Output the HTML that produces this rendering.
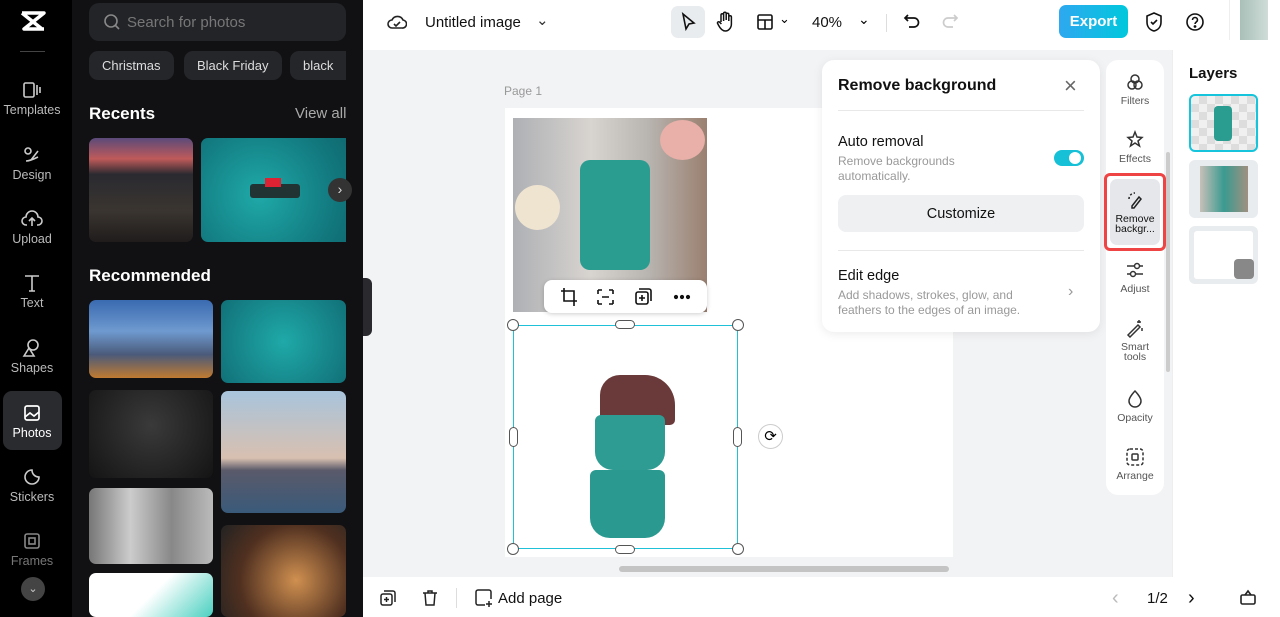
<!DOCTYPE html>
<html><head><meta charset="utf-8"><style>
*{margin:0;padding:0;box-sizing:border-box}
body{width:1280px;height:617px;overflow:hidden;font-family:"Liberation Sans",sans-serif;background:#f2f3f5;position:relative}
.abs{position:absolute}
.rail{left:0;top:0;width:72px;height:617px;background:#000}
.ri{position:absolute;left:0;width:64px;text-align:center;color:#bbb;font-size:12.5px}
.ri svg{display:block;margin:0 auto 3px}
.panel{left:72px;top:0;width:291px;height:617px;background:#111113}
.chip{position:absolute;top:51px;height:29px;border-radius:9px;background:#25262a;color:#ddd;font-size:13px;line-height:29px;padding:0 13px}
.img{position:absolute;border-radius:7px}
.top{left:363px;top:0;width:917px;height:50px;background:#fff}
.bot{left:363px;top:577px;width:809px;height:40px;background:#fff}
.tl{position:absolute;left:1106px;width:58px;text-align:center;font-size:10.5px;color:#555;line-height:10px}
.tl svg{display:block;margin:0 auto 4px}
</style></head><body>
<div class="abs rail"></div>
<svg class="abs" style="left:19px;top:11px" width="28" height="20" viewBox="0 0 28 20"><path d="M3 2h22l-20 16h20M3 18M3 2l20 16" stroke="#fff" stroke-width="3.5" fill="none" stroke-linejoin="round"/></svg>
<div class="abs" style="left:20px;top:51px;width:25px;height:1px;background:#444"></div>
<div class="ri" style="top:80px"><svg width="20" height="20" viewBox="0 0 20 20" fill="none" stroke="#ccc" stroke-width="1.6"><rect x="2" y="3" width="10" height="14" rx="1.5"/><path d="M15 5v10M18 7v6"/></svg>Templates</div>
<div class="ri" style="top:145px"><svg width="20" height="20" viewBox="0 0 20 20" fill="none" stroke="#ccc" stroke-width="1.6"><circle cx="6" cy="6" r="3"/><path d="M9 15l7-9M4 16c4 0 8-2 12-4"/></svg>Design</div>
<div class="ri" style="top:209px"><svg width="22" height="20" viewBox="0 0 22 20" fill="none" stroke="#ccc" stroke-width="1.6"><path d="M6 16H5a4 4 0 010-8 6 6 0 0112 0 4 4 0 010 8h-1M11 17V9M8 12l3-3 3 3"/></svg>Upload</div>
<div class="ri" style="top:273px"><svg width="20" height="20" viewBox="0 0 20 20" fill="none" stroke="#ccc" stroke-width="1.6"><path d="M3 3h14M10 3v15M7 18h6"/></svg>Text</div>
<div class="ri" style="top:338px"><svg width="20" height="20" viewBox="0 0 20 20" fill="none" stroke="#ccc" stroke-width="1.6"><circle cx="11" cy="7" r="5"/><path d="M2 18l5-8 5 8z"/></svg>Shapes</div>
<div class="abs" style="left:3px;top:391px;width:59px;height:59px;border-radius:9px;background:#2a2b2f"></div>
<div class="ri" style="top:403px;color:#fff"><svg width="20" height="20" viewBox="0 0 20 20" fill="none" stroke="#fff" stroke-width="1.7"><rect x="3" y="3" width="14" height="14" rx="2"/><path d="M3 14l5-4 4 3 5-4"/></svg>Photos</div>
<div class="ri" style="top:467px"><svg width="20" height="20" viewBox="0 0 20 20" fill="none" stroke="#ccc" stroke-width="1.6"><path d="M17 10a7 7 0 11-7-7c0 4 3 7 7 7z"/></svg>Stickers</div>
<div class="ri" style="top:531px;color:#777"><svg width="20" height="20" viewBox="0 0 20 20" fill="none" stroke="#888" stroke-width="1.6"><rect x="3" y="3" width="14" height="14" rx="2"/><rect x="7" y="7" width="6" height="6"/></svg>Frames</div>
<div class="abs" style="left:21px;top:577px;width:24px;height:24px;border-radius:50%;background:#444;color:#ccc;font-size:11px;text-align:center;line-height:24px">⌄</div>

<div class="abs panel"></div>
<div class="abs" style="left:89px;top:3px;width:257px;height:38px;border-radius:10px;background:#232428;color:#777;font-size:15px;line-height:40px;padding-left:38px">Search for photos</div>
<svg class="abs" style="left:103px;top:13px" width="18" height="18" viewBox="0 0 18 18" fill="none" stroke="#888" stroke-width="1.6"><circle cx="8" cy="8" r="6"/><path d="M12.5 12.5L16 16"/></svg>
<div class="chip" style="left:89px">Christmas</div>
<div class="chip" style="left:184px">Black Friday</div>
<div class="chip" style="left:290px;width:56px;border-radius:9px 0 0 9px">black</div>
<div class="abs" style="left:89px;top:104px;color:#fff;font-weight:bold;font-size:17px">Recents</div>
<div class="abs" style="left:295px;top:105px;color:#aaa;font-size:15px">View all</div>
<div class="img" style="left:89px;top:138px;width:104px;height:104px;background:linear-gradient(180deg,#5a4a7a 0%,#c05a5a 20%,#2a2a30 35%,#3a3530 70%,#201c1c)"></div>
<div class="img" style="left:201px;top:138px;width:145px;height:104px;border-radius:7px 0 0 7px;background:radial-gradient(circle at 40% 55%,#1fa9a8,#127a80 70%,#0f6a70)"></div>
<div class="abs" style="left:250px;top:184px;width:50px;height:14px;background:#233;border-radius:3px"></div>
<div class="abs" style="left:265px;top:178px;width:16px;height:9px;background:#d23"></div>
<div class="abs" style="left:328px;top:178px;width:24px;height:24px;border-radius:50%;background:#333;color:#ddd;text-align:center;line-height:23px;font-size:14px">›</div>
<div class="abs" style="left:89px;top:266px;color:#fff;font-weight:bold;font-size:17px">Recommended</div>
<div class="img" style="left:89px;top:300px;width:124px;height:78px;background:linear-gradient(180deg,#3a6ab0,#6f9ad0 40%,#4a5a7a 70%,#c07a30)"></div>
<div class="img" style="left:221px;top:300px;width:125px;height:83px;background:radial-gradient(circle,#1fa9a8,#117078)"></div>
<div class="img" style="left:89px;top:390px;width:124px;height:88px;background:radial-gradient(circle at 50% 40%,#3a3a3a,#141414)"></div>
<div class="img" style="left:221px;top:391px;width:125px;height:122px;background:linear-gradient(180deg,#a8c4dc,#d8c0b0 55%,#5a5a6a 65%,#3a5a7a)"></div>
<div class="img" style="left:89px;top:488px;width:124px;height:76px;background:linear-gradient(90deg,#777,#ccc,#888,#bbb)"></div>
<div class="img" style="left:221px;top:525px;width:125px;height:92px;background:radial-gradient(circle at 60% 60%,#d09050,#503020 60%,#222)"></div>
<div class="img" style="left:89px;top:573px;width:124px;height:44px;background:linear-gradient(135deg,#fff 50%,#4ad0c0)"></div>
<div class="abs" style="left:363px;top:278px;width:9px;height:58px;background:#2a2a2e;border-radius:0 6px 6px 0"></div>

<div class="abs top"></div>
<svg class="abs" style="left:387px;top:12px" width="20" height="20" viewBox="0 0 20 20" fill="none" stroke="#222" stroke-width="1.6"><path d="M6 16H5a4 4 0 010-8 6 6 0 0111 0 4 4 0 01-1 8H6z"/><path d="M7 12l2 2 4-4"/></svg>
<div class="abs" style="left:425px;top:14px;font-size:15px;color:#111">Untitled image</div>
<div class="abs" style="left:536px;top:11px;font-size:15px;color:#333">⌄</div>
<div class="abs" style="left:671px;top:6px;width:34px;height:32px;border-radius:7px;background:#e9ecef"></div>
<svg class="abs" style="left:679px;top:12px" width="18" height="20" viewBox="0 0 18 20" fill="none" stroke="#111" stroke-width="1.6"><path d="M4 2l11 9-5 1-3 5z"/></svg>
<svg class="abs" style="left:715px;top:11px" width="20" height="22" viewBox="0 0 20 22" fill="none" stroke="#111" stroke-width="1.5"><path d="M6 11V4a1.3 1.3 0 012.6 0v6M8.6 9V2.5a1.3 1.3 0 012.6 0V9M11.2 9V3.5a1.3 1.3 0 012.6 0V10M13.8 10V6a1.3 1.3 0 012.6 0v7c0 4-3 7-6 7s-5-2-7-6l-1-2a1.3 1.3 0 012-1l2 2"/></svg>
<svg class="abs" style="left:756px;top:13px" width="18" height="18" viewBox="0 0 18 18" fill="none" stroke="#111" stroke-width="1.6"><rect x="2" y="2" width="14" height="14" rx="1.5"/><path d="M2 7h14M9 7v9"/></svg>
<div class="abs" style="left:779px;top:11px;font-size:13px">⌄</div>
<div class="abs" style="left:812px;top:14px;font-size:15px;color:#111">40%</div>
<div class="abs" style="left:858px;top:11px;font-size:14px">⌄</div>
<div class="abs" style="left:886px;top:14px;width:1px;height:18px;background:#ddd"></div>
<svg class="abs" style="left:903px;top:12px" width="18" height="18" viewBox="0 0 18 18" fill="none" stroke="#111" stroke-width="1.7"><path d="M5 3L2 6l3 3M2 6h9a4.5 4.5 0 010 9H6"/></svg>
<svg class="abs" style="left:941px;top:12px" width="18" height="18" viewBox="0 0 18 18" fill="none" stroke="#ccc" stroke-width="1.7"><path d="M13 3l3 3-3 3M16 6H7a4.5 4.5 0 000 9h5"/></svg>
<div class="abs" style="left:1059px;top:5px;width:69px;height:33px;border-radius:7px;background:linear-gradient(90deg,#2ea8f0,#00c8dc);color:#fff;font-size:15px;font-weight:bold;text-align:center;line-height:34px">Export</div>
<svg class="abs" style="left:1144px;top:11px" width="20" height="22" viewBox="0 0 20 22" fill="none" stroke="#111" stroke-width="1.6"><path d="M10 2l7 3v6c0 5-3 8-7 9-4-1-7-4-7-9V5z"/><path d="M7 11l2 2 4-4"/></svg>
<svg class="abs" style="left:1185px;top:12px" width="20" height="20" viewBox="0 0 20 20" fill="none" stroke="#111" stroke-width="1.6"><circle cx="10" cy="10" r="8"/><path d="M7.5 8a2.5 2.5 0 115 0c0 2-2.5 2-2.5 4"/><circle cx="10" cy="14.5" r=".6" fill="#111"/></svg>
<div class="abs" style="left:1229px;top:0;width:1px;height:40px;background:#eee"></div>
<div class="abs" style="left:1240px;top:0;width:28px;height:40px;background:linear-gradient(90deg,#a8c0b8,#d0dcd8)"></div>

<div class="abs" style="left:1172px;top:50px;width:108px;height:567px;background:#fff;border-left:1px solid #eee"></div>
<div class="abs" style="left:1189px;top:65px;font-weight:bold;font-size:15px;color:#111">Layers</div>
<div class="abs" style="left:1189px;top:94px;width:69px;height:58px;border:2px solid #16c5db;border-radius:6px;background:repeating-conic-gradient(#ddd 0 25%,#f0f0f0 0 50%) 0 0/16px 16px"></div>
<div class="abs" style="left:1214px;top:106px;width:18px;height:35px;background:#2a9c90;border-radius:4px"></div>
<div class="abs" style="left:1189px;top:160px;width:69px;height:58px;border-radius:6px;background:#e8ecef"></div>
<div class="abs" style="left:1200px;top:166px;width:48px;height:46px;background:linear-gradient(90deg,#c8c0b8,#3a9a90 50%,#a09080)"></div>
<div class="abs" style="left:1189px;top:226px;width:69px;height:58px;border-radius:6px;background:#e8ecef"></div>
<div class="abs" style="left:1194px;top:231px;width:59px;height:48px;background:#fff;border-radius:3px"></div>
<div class="abs" style="left:1234px;top:259px;width:20px;height:20px;background:#888;border-radius:4px"></div>

<div class="abs" style="left:504px;top:84px;font-size:12px;color:#999">Page 1</div>
<div class="abs" style="left:505px;top:108px;width:448px;height:449px;background:#fff"></div>
<div class="abs" style="left:513px;top:118px;width:194px;height:194px;background:linear-gradient(90deg,#aeb0b4,#d8d4d0 40%,#b8b4b0 70%,#9a8070)"></div>
<div class="abs" style="left:580px;top:160px;width:70px;height:110px;background:#2a9c90;border-radius:10px"></div>
<div class="abs" style="left:515px;top:185px;width:45px;height:45px;background:#efe4d0;border-radius:50%"></div>
<div class="abs" style="left:660px;top:120px;width:45px;height:40px;background:#e8b0a8;border-radius:50%"></div>
<div class="abs" style="left:544px;top:280px;width:163px;height:33px;background:#fff;border-radius:8px;box-shadow:0 1px 5px rgba(0,0,0,.2);font-size:14px;color:#111"></div>
<svg class="abs" style="left:560px;top:287px" width="140" height="20" viewBox="0 0 140 20" fill="none" stroke="#111" stroke-width="1.6"><path d="M4 1v13h13M1 4h13v15"/><path d="M38 3h4M38 3v4M53 3h-4M53 3v4M38 17h4M38 17v-4M53 17h-4M53 17v-4M42 10h7"/><rect x="76" y="5" width="12" height="12" rx="2"/><path d="M79 2h10a2 2 0 012 2v10M82 8v6M79 11h6"/><circle cx="116" cy="10" r="1.3" fill="#111"/><circle cx="122" cy="10" r="1.3" fill="#111"/><circle cx="128" cy="10" r="1.3" fill="#111"/></svg>
<div class="abs" style="left:513px;top:325px;width:225px;height:224px;border:1.5px solid #1ec1d8"></div>
<div class="abs" style="left:590px;top:370px;width:100px;height:170px">
<div class="abs" style="left:10px;top:5px;width:75px;height:50px;background:#6a3a3a;border-radius:20px 30px 5px 5px"></div>
<div class="abs" style="left:5px;top:45px;width:70px;height:55px;background:#2e9c92;border-radius:6px 6px 18px 18px"></div>
<div class="abs" style="left:0;top:100px;width:75px;height:68px;background:#2a9a90;border-radius:6px 6px 20px 20px"></div>
</div>
<div class="abs" style="left:507px;top:319px;width:12px;height:12px;border-radius:50%;background:#fff;border:1px solid #555"></div>
<div class="abs" style="left:732px;top:319px;width:12px;height:12px;border-radius:50%;background:#fff;border:1px solid #555"></div>
<div class="abs" style="left:507px;top:543px;width:12px;height:12px;border-radius:50%;background:#fff;border:1px solid #555"></div>
<div class="abs" style="left:732px;top:543px;width:12px;height:12px;border-radius:50%;background:#fff;border:1px solid #555"></div>
<div class="abs" style="left:615px;top:320px;width:20px;height:9px;border-radius:5px;background:#fff;border:1px solid #555"></div>
<div class="abs" style="left:615px;top:545px;width:20px;height:9px;border-radius:5px;background:#fff;border:1px solid #555"></div>
<div class="abs" style="left:509px;top:427px;width:9px;height:20px;border-radius:5px;background:#fff;border:1px solid #555"></div>
<div class="abs" style="left:733px;top:427px;width:9px;height:20px;border-radius:5px;background:#fff;border:1px solid #555"></div>
<div class="abs" style="left:758px;top:424px;width:25px;height:25px;border-radius:50%;background:#fff;border:1px solid #ccc;text-align:center;line-height:23px;font-size:15px">⟳</div>
<div class="abs" style="left:619px;top:566px;width:330px;height:6px;border-radius:3px;background:#c4c4c4"></div>

<div class="abs" style="left:822px;top:60px;width:278px;height:272px;background:#fff;border-radius:12px;box-shadow:0 2px 10px rgba(0,0,0,.08)"></div>
<div class="abs" style="left:838px;top:77px;font-weight:bold;font-size:16px;color:#111">Remove background</div>
<div class="abs" style="left:1064px;top:73px;font-size:22px;color:#666;font-weight:300">×</div>
<div class="abs" style="left:838px;top:110px;width:246px;height:1px;background:#e8e8e8"></div>
<div class="abs" style="left:838px;top:134px;font-size:14.5px;color:#111">Auto removal</div>
<div class="abs" style="left:838px;top:154px;font-size:12px;color:#999;line-height:15px">Remove backgrounds<br>automatically.</div>
<div class="abs" style="left:1054px;top:150px;width:30px;height:16px;border-radius:8px;background:#16c0d6"></div>
<div class="abs" style="left:1069px;top:152px;width:12px;height:12px;border-radius:50%;background:#fff"></div>
<div class="abs" style="left:838px;top:195px;width:246px;height:37px;border-radius:8px;background:#eef0f2;text-align:center;line-height:39px;font-size:14.5px;color:#111">Customize</div>
<div class="abs" style="left:838px;top:250px;width:246px;height:1px;background:#e8e8e8"></div>
<div class="abs" style="left:838px;top:268px;font-size:14.5px;color:#111">Edit edge</div>
<div class="abs" style="left:838px;top:288px;font-size:12px;color:#999;line-height:15px">Add shadows, strokes, glow, and<br>feathers to the edges of an image.</div>
<div class="abs" style="left:1068px;top:283px;font-size:16px;color:#999">›</div>

<div class="abs" style="left:1106px;top:60px;width:58px;height:435px;background:#fff;border-radius:12px"></div>
<div class="abs" style="left:1166px;top:152px;width:4px;height:220px;border-radius:2px;background:#ccc"></div>
<div class="tl" style="top:72px"><svg width="20" height="20" viewBox="0 0 20 20" fill="none" stroke="#333" stroke-width="1.5"><circle cx="10" cy="7" r="4"/><circle cx="7" cy="13" r="4"/><circle cx="13" cy="13" r="4"/></svg>Filters</div>
<div class="tl" style="top:130px"><svg width="20" height="20" viewBox="0 0 20 20" fill="none" stroke="#333" stroke-width="1.5"><path d="M10 2l2 5 5 .5-4 3.5 1.5 5L10 13l-4.5 3 1.5-5-4-3.5 5-.5z"/></svg>Effects</div>
<div class="abs" style="left:1104px;top:173px;width:62px;height:78px;border:3px solid #ee4444;border-radius:6px"></div>
<div class="abs" style="left:1110px;top:179px;width:50px;height:66px;border-radius:7px;background:#e5e7ea"></div>
<div class="tl" style="top:190px;color:#111"><svg width="20" height="20" viewBox="0 0 20 20" fill="none" stroke="#222" stroke-width="1.5"><path d="M4 9a6 6 0 016-6" stroke-dasharray="2 2"/><path d="M7 16l7-9 2 2-7 9H7z"/></svg>Remove<br>backgr...</div>
<div class="tl" style="top:260px"><svg width="20" height="20" viewBox="0 0 20 20" fill="none" stroke="#333" stroke-width="1.5"><path d="M2 6h16M2 14h16"/><circle cx="12" cy="6" r="2.5" fill="#fff"/><circle cx="8" cy="14" r="2.5" fill="#fff"/></svg>Adjust</div>
<div class="tl" style="top:318px"><svg width="20" height="20" viewBox="0 0 20 20" fill="none" stroke="#333" stroke-width="1.5"><path d="M3 17l10-10 2 2L5 19zM14 2v3M16 4h-4M17 10v3"/></svg>Smart<br>tools</div>
<div class="tl" style="top:389px"><svg width="20" height="20" viewBox="0 0 20 20" fill="none" stroke="#333" stroke-width="1.5"><path d="M10 2s6 6 6 10a6 6 0 01-12 0c0-4 6-10 6-10z"/></svg>Opacity</div>
<div class="tl" style="top:447px"><svg width="20" height="20" viewBox="0 0 20 20" fill="none" stroke="#333" stroke-width="1.5"><rect x="2" y="2" width="16" height="16" rx="3" stroke-dasharray="3 2"/><rect x="7" y="7" width="6" height="6" rx="1"/></svg>Arrange</div>

<div class="abs bot"></div>
<div class="abs" style="left:1172px;top:577px;width:108px;height:40px;background:#fff"></div>
<svg class="abs" style="left:379px;top:589px" width="18" height="18" viewBox="0 0 18 18" fill="none" stroke="#222" stroke-width="1.5"><rect x="2" y="5" width="11" height="11" rx="2"/><path d="M5 2h9a2 2 0 012 2v9M7.5 8v5M5 10.5h5"/></svg>
<svg class="abs" style="left:421px;top:589px" width="18" height="18" viewBox="0 0 18 18" fill="none" stroke="#222" stroke-width="1.5"><path d="M2 4h14M7 4V2h4v2M4 4l1 12h8l1-12"/></svg>
<div class="abs" style="left:456px;top:588px;width:1px;height:20px;background:#ddd"></div>
<svg class="abs" style="left:474px;top:588px" width="20" height="20" viewBox="0 0 20 20" fill="none" stroke="#222" stroke-width="1.5"><path d="M11 17H4a2 2 0 01-2-2V4a2 2 0 012-2h11a2 2 0 012 2v7M15 13v6M12 16h6"/></svg>
<div class="abs" style="left:498px;top:590px;font-size:15px;color:#111">Add page</div>
<div class="abs" style="left:1112px;top:587px;font-size:20px;color:#bbb">‹</div>
<div class="abs" style="left:1147px;top:590px;font-size:15px;color:#111">1/2</div>
<div class="abs" style="left:1188px;top:587px;font-size:20px;color:#111">›</div>
<svg class="abs" style="left:1239px;top:588px" width="18" height="18" viewBox="0 0 18 18" fill="none" stroke="#222" stroke-width="1.6"><rect x="2" y="7" width="14" height="9" rx="1.5"/><path d="M6 7l3-4 3 4"/></svg>
</body></html>
